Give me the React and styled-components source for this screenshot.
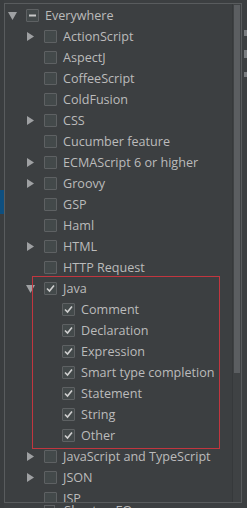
import React from "react";
import styled, { createGlobalStyle } from "styled-components";

const Global = createGlobalStyle`
  html, body { margin: 0; padding: 0; background: #3c3f41; }
  body { width: 247px; height: 508px; overflow: hidden; font-family: "Open Sans", "Noto Sans", sans-serif; }
`;

const Screen = styled.div`
  width: 247px;
  height: 508px;
  display: grid;
  grid-template-columns: 4px 238px 5px;
  grid-template-rows: 3px 500px 5px;
  background: #3c3f41;
  overflow: hidden;
`;

const LeftStrip = styled.div`
  grid-column: 1;
  grid-row: 1 / 4;
  background: #3a3d3f;
  display: flex;
  flex-direction: column;
`;

const Selection = styled.div`
  margin-top: 190px;
  height: 24px;
  background: #0e4f7f;
`;

const RightStrip = styled.div`
  grid-column: 3;
  grid-row: 1 / 4;
  background: #3c3f41;
  display: flex;
  flex-direction: column;
  gap: 14px;
  padding-top: 30px;
  align-items: flex-end;
`;

const Tick = styled.div`
  width: 3px;
  height: ${(p) => p.h}px;
  background: #7a7d80;
`;

const TopStrip = styled.div`
  grid-column: 2;
  grid-row: 1;
  background: #3c3f41;
`;

const Popup = styled.div`
  grid-column: 2;
  grid-row: 2;
  box-sizing: border-box;
  border: 1px solid #595c5e;
  background: #3c3f41;
  display: flex;
  overflow: hidden;
`;

const List = styled.div`
  position: relative;
  flex: 1;
  padding-top: 1px;
  overflow: hidden;
`;

const ScrollTrack = styled.div`
  width: 8px;
  background: #3f4244;
  border-left: 1px solid #36393b;
  display: flex;
  flex-direction: column;
`;

const Thumb = styled.div`
  margin: 1px 0 0 1px;
  width: 6px;
  height: 368px;
  background: #5b5e61;
`;

const Row = styled.div`
  height: 21px;
  display: flex;
  align-items: center;
  padding-left: ${(p) => p.depth * 18}px;
  color: #bbbbbb;
  font-size: 12.6px;
  white-space: nowrap;
`;

const ArrowSlot = styled.div`
  width: 14px;
  height: 21px;
  display: flex;
  align-items: center;
  justify-content: center;
  flex-shrink: 0;
`;

const Box = styled.div`
  box-sizing: border-box;
  width: 13px;
  height: 13px;
  margin-left: 7px;
  border: 1px solid #5e6163;
  background: #43494a;
  border-radius: 1px;
  display: flex;
  align-items: center;
  justify-content: center;
  flex-shrink: 0;
`;

const Label = styled.span`
  margin-left: 6px;
  line-height: 21px;
`;

const Highlight = styled.div`
  position: absolute;
  left: 27px;
  top: 272px;
  width: 188px;
  height: 173px;
  box-sizing: border-box;
  border: 1px solid #c2363f;
  pointer-events: none;
`;

const BottomStrip = styled.div`
  grid-column: 2;
  grid-row: 3;
  overflow: hidden;
  display: flex;
  padding-left: 40px;
  gap: 9px;
  align-items: flex-start;
`;

const BgBox = styled.div`
  width: 11px;
  height: 11px;
  margin-top: 2px;
  box-sizing: border-box;
  border: 1px solid #5e6163;
`;

const BgText = styled.span`
  color: #bbbbbb;
  font-size: 13px;
  line-height: 13px;
  margin-top: 1px;
`;

const Arrow = ({ open }) =>
  open ? (
    <svg width="9" height="8" viewBox="0 0 9 8">
      <path d="M0 0 H9 L4.5 8 Z" fill="#9fa1a3" />
    </svg>
  ) : (
    <svg width="7" height="9" viewBox="0 0 7 9">
      <path d="M0 0 L7 4.5 L0 9 Z" fill="#9fa1a3" />
    </svg>
  );

const Check = () => (
  <svg width="11" height="11" viewBox="0 0 11 11">
    <path d="M2 5.5 L4.5 8 L9 2.5" fill="none" stroke="#d0d0d0" strokeWidth="1.6" />
  </svg>
);

const Dash = () => (
  <svg width="11" height="11" viewBox="0 0 11 11">
    <rect x="2" y="4.5" width="7" height="2" fill="#c8c8c8" />
  </svg>
);

const items = [
  { label: "Everywhere", depth: 0, arrow: "open", state: "dash" },
  { label: "ActionScript", depth: 1, arrow: "closed" },
  { label: "AspectJ", depth: 1 },
  { label: "CoffeeScript", depth: 1 },
  { label: "ColdFusion", depth: 1 },
  { label: "CSS", depth: 1, arrow: "closed" },
  { label: "Cucumber feature", depth: 1 },
  { label: "ECMAScript 6 or higher", depth: 1, arrow: "closed" },
  { label: "Groovy", depth: 1, arrow: "closed" },
  { label: "GSP", depth: 1 },
  { label: "Haml", depth: 1 },
  { label: "HTML", depth: 1, arrow: "closed" },
  { label: "HTTP Request", depth: 1 },
  { label: "Java", depth: 1, arrow: "open", state: "check" },
  { label: "Comment", depth: 2, state: "check" },
  { label: "Declaration", depth: 2, state: "check" },
  { label: "Expression", depth: 2, state: "check" },
  { label: "Smart type completion", depth: 2, state: "check" },
  { label: "Statement", depth: 2, state: "check" },
  { label: "String", depth: 2, state: "check" },
  { label: "Other", depth: 2, state: "check" },
  { label: "JavaScript and TypeScript", depth: 1, arrow: "closed" },
  { label: "JSON", depth: 1, arrow: "closed" },
  { label: "JSP", depth: 1 },
];

export default function App() {
  return (
    <>
      <Global />
      <Screen>
        <LeftStrip>
          <Selection />
        </LeftStrip>
        <TopStrip />
        <Popup>
          <List>
            {items.map((it) => (
              <Row key={it.label} depth={it.depth}>
                <ArrowSlot>{it.arrow && <Arrow open={it.arrow === "open"} />}</ArrowSlot>
                <Box>
                  {it.state === "check" && <Check />}
                  {it.state === "dash" && <Dash />}
                </Box>
                <Label>{it.label}</Label>
              </Row>
            ))}
            <Highlight />
          </List>
          <ScrollTrack>
            <Thumb />
          </ScrollTrack>
        </Popup>
        <RightStrip>
          <Tick h={6} />
          <Tick h={8} />
          <Tick h={5} />
        </RightStrip>
        <BottomStrip>
          <BgBox />
          <BgText>Shorten FQ names</BgText>
        </BottomStrip>
      </Screen>
    </>
  );
}
